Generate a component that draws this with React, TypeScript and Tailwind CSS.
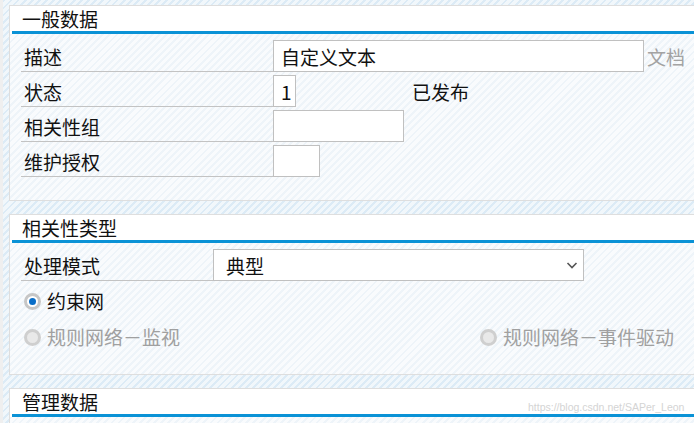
import React from "react";

const font = { fontFamily: '"Noto Sans CJK SC", "Noto Sans", sans-serif' };

function PanelHeader({ title }: { title: string }) {
  return (
    <div className="bg-white">
      <div className="ml-[2px] h-[28px] border-b-[3px] border-[#0a92d6] pl-[10px] text-[19px] leading-[25px] text-[#111]">
        {title}
      </div>
    </div>
  );
}

function FieldRow({
  label,
  inputWidth,
  value,
  after,
}: {
  label: string;
  inputWidth: string;
  value?: string;
  after?: React.ReactNode;
}) {
  return (
    <div className="flex h-[32px] items-stretch">
      <div className="w-[252px] border-b border-[#c3c3c3] px-[3px] text-[19px] leading-[34px] text-[#111]">
        {label}
      </div>
      <div
        className={`${inputWidth} border border-[#c0c0c0] bg-white px-[7px] text-[19px] leading-[31px] text-[#111]`}
      >
        {value}
      </div>
      {after}
    </div>
  );
}

function Radio({ label, checked, disabled }: { label: string; checked?: boolean; disabled?: boolean }) {
  return (
    <div className="flex items-center gap-[6px]">
      <span
        className={`flex h-[17px] w-[17px] items-center justify-center rounded-full border-[3px] ${
          disabled ? "border-[#cfcfcf] bg-[#e9e9e9]" : "border-[#c6c6c6] bg-white"
        }`}
      >
        {checked && <span className="h-[7px] w-[7px] rounded-full bg-[#0a6ec8]" />}
      </span>
      <span className={`text-[19px] leading-[26px] ${disabled ? "text-[#a0a0a0]" : "text-[#111]"}`}>{label}</span>
    </div>
  );
}

const bodyHatch =
  "bg-[repeating-linear-gradient(135deg,#eef4f9_0px,#eef4f9_2px,#f9fbfd_2px,#f9fbfd_5px)]";

export default function App() {
  return (
    <div className="relative flex h-[423px] w-[694px] overflow-hidden" style={font}>
      <div className="w-[3px] shrink-0 bg-[#efefef]" />
      <div className="flex flex-1 flex-col gap-[13px] bg-[repeating-linear-gradient(135deg,#dcebf6_0px,#dcebf6_2px,#f1f7fb_2px,#f1f7fb_5px)] pl-[6px] pt-[5px]">
        {/* 一般数据 */}
        <section className="w-[720px] shrink-0 border border-[#dedede]">
          <PanelHeader title="一般数据" />
          <div className={`${bodyHatch} flex h-[166px] flex-col gap-[3px] pl-[11px] pt-[6px]`}>
            <FieldRow
              label="描述"
              inputWidth="w-[371px]"
              value="自定义文本"
              after={<span className="ml-[3px] text-[19px] leading-[34px] text-[#a3a3a3]">文档</span>}
            />
            <FieldRow
              label="状态"
              inputWidth="w-[23px]"
              value="1"
              after={<span className="ml-[116px] text-[19px] leading-[34px] text-[#111]">已发布</span>}
            />
            <FieldRow label="相关性组" inputWidth="w-[131px]" />
            <FieldRow label="维护授权" inputWidth="w-[47px]" />
          </div>
        </section>

        {/* 相关性类型 */}
        <section className="w-[720px] shrink-0 border border-[#dedede]">
          <PanelHeader title="相关性类型" />
          <div className={`${bodyHatch} flex h-[131px] flex-col pl-[11px] pt-[6px]`}>
            <div className="flex h-[32px] items-stretch">
              <div className="w-[192px] border-b border-[#c3c3c3] px-[3px] text-[19px] leading-[34px] text-[#111]">
                处理模式
              </div>
              <div className="flex w-[371px] items-center justify-between border border-[#c0c0c0] bg-white pl-[12px] pr-[4px] text-[19px] text-[#111]">
                <span className="leading-[31px]">典型</span>
                <svg width="14" height="14" viewBox="0 0 14 14" fill="none">
                  <path d="M2.5 5 L7 9.5 L11.5 5" stroke="#555" strokeWidth="1.6" />
                </svg>
              </div>
            </div>
            <div className="mt-[7px] pl-[3px]">
              <Radio label="约束网" checked />
            </div>
            <div className="mt-[10px] flex pl-[3px]">
              <div className="w-[456px]">
                <Radio label="规则网络－监视" disabled />
              </div>
              <Radio label="规则网络－事件驱动" disabled />
            </div>
          </div>
        </section>

        {/* 管理数据 */}
        <section className="w-[720px] shrink-0 border border-[#dedede]">
          <PanelHeader title="管理数据" />
          <div className={`${bodyHatch} h-[40px]`} />
        </section>
      </div>
      <span
        className="absolute left-[528px] top-[400px] text-[10.5px] text-[#d4d4d4]"
        style={{ fontFamily: '"Liberation Sans", Arial, sans-serif' }}
      >
        https://blog.csdn.net/SAPer_Leon
      </span>
    </div>
  );
}
